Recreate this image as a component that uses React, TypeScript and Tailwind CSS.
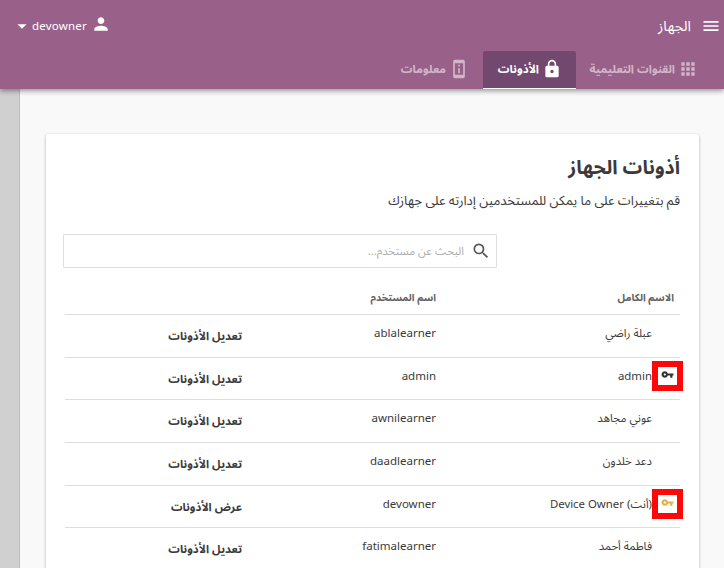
import React from "react";
import {
  MdApps,
  MdArrowDropDown,
  MdLock,
  MdMenu,
  MdPermDeviceInformation,
  MdPerson,
  MdSearch,
  MdVpnKey,
} from "react-icons/md";

type User = { name: string; username: string; action: string; keyColor?: string };

const users: User[] = [
  { name: "عبلة راضي", username: "ablalearner", action: "تعديل الأذونات" },
  { name: "admin", username: "admin", action: "تعديل الأذونات", keyColor: "text-[#333333]" },
  { name: "عوني مجاهد", username: "awnilearner", action: "تعديل الأذونات" },
  { name: "دعد خلدون", username: "daadlearner", action: "تعديل الأذونات" },
  { name: "Device Owner (أنت)", username: "devowner", action: "عرض الأذونات", keyColor: "text-[#e8ae4c]" },
  { name: "فاطمة أحمد", username: "fatimalearner", action: "تعديل الأذونات" },
];

function Header() {
  return (
    <header className="relative z-10 flex h-[89px] flex-col justify-between bg-[#996189] text-white shadow-[0_2px_5px_rgba(0,0,0,0.4)]">
      <div className="flex h-[51px] items-center justify-between pr-[3px] pl-[11px]">
        <div className="flex items-center pt-px">
          <MdMenu size={20} />
          <span className="mr-[10px] text-[14.3px]">الجهاز</span>
        </div>
        <div className="flex items-center">
          <MdPerson size={20} className="-mt-[3px]" />
          <span className="mr-[4px] text-[11.5px] tracking-[0.2px]">devowner</span>
          <MdArrowDropDown size={22} className="-mr-px" />
        </div>
      </div>
      <nav className="flex h-[38px] pr-[13px] text-[11.5px] font-bold">
        <div className="flex w-[135px] items-center gap-[3px] pr-[13px] pb-[2px] text-[#d1b6ca]">
          <MdApps size={20} />
          <span>القنوات التعليمية</span>
        </div>
        <div className="flex w-[93px] items-center gap-[3px] rounded-t-[2px] border-b border-white bg-[#72486f] pr-[14px] pb-[2px]">
          <MdLock size={20} />
          <span>الأذونات</span>
        </div>
        <div className="flex items-center gap-[3px] pr-[14px] pb-[2px] text-[#d1b6ca]">
          <MdPermDeviceInformation size={20} />
          <span>معلومات</span>
        </div>
      </nav>
    </header>
  );
}

function Row({ user }: { user: User }) {
  return (
    <div className="flex h-[42.67px] items-start border-b border-[#dedede] pt-[9px]">
      <div className="relative w-[244px] pr-[28px] text-[11.4px] leading-[18px]">
        {user.keyColor && (
          <span className="absolute -top-[6px] -right-[3px] flex h-[30px] w-[31px] items-center justify-center border-[6px] border-[#fc0808] bg-white pb-[2px]">
            <MdVpnKey size={13} className={user.keyColor} />
          </span>
        )}
        <bdi>{user.name}</bdi>
      </div>
      <div className="w-[194px] text-[11.5px] leading-[18px]">{user.username}</div>
      <div className="pt-[3px] text-[11.4px] leading-[17px] font-bold">{user.action}</div>
    </div>
  );
}

export default function App() {
  return (
    <div dir="rtl" className="h-[568px] w-[724px] overflow-hidden bg-[#f9f9f9] font-['Noto_Sans','Noto_Sans_Arabic','DejaVu_Sans',sans-serif] text-[#3a3a3a]">
      <Header />
      <div className="flex h-[479px] justify-between">
        <main className="mt-[45px] mr-[25px] h-[450px] w-[653px] rounded-t-[2px] bg-white pr-[19px] pl-[19px] shadow-[0_1px_3px_rgba(0,0,0,0.32)]">
          <h1 className="pt-[18px] text-[19.5px] leading-[30px] font-bold">أذونات الجهاز</h1>
          <p className="mt-[8px] text-[13px] leading-[20px]">قم بتغييرات على ما يمكن للمستخدمين إدارته على جهازك</p>
          <div className="mt-[24px] mr-[183px] flex h-[34px] w-[434px] items-center rounded-[1px] border border-[#dedede] pr-[5px]">
            <MdSearch size={20} className="-mt-px text-[#555555]" />
            <span className="mr-[7px] text-[11.3px] text-[#adadad]">البحث عن مستخدم...</span>
          </div>
          <div className="mt-[13px] w-[615px]">
            <div className="flex h-[34px] items-center border-b border-[#dedede] text-[10px] font-bold text-[#616161]">
              <span className="w-[244px] pr-[6px] text-[10.2px]">الاسم الكامل</span>
              <span>اسم المستخدم</span>
            </div>
            {users.map((u) => (
              <Row key={u.username} user={u} />
            ))}
          </div>
        </main>
        <aside className="w-[20px] border-r border-[#bdbdbd] bg-[#d0d0d0]" />
      </div>
    </div>
  );
}
